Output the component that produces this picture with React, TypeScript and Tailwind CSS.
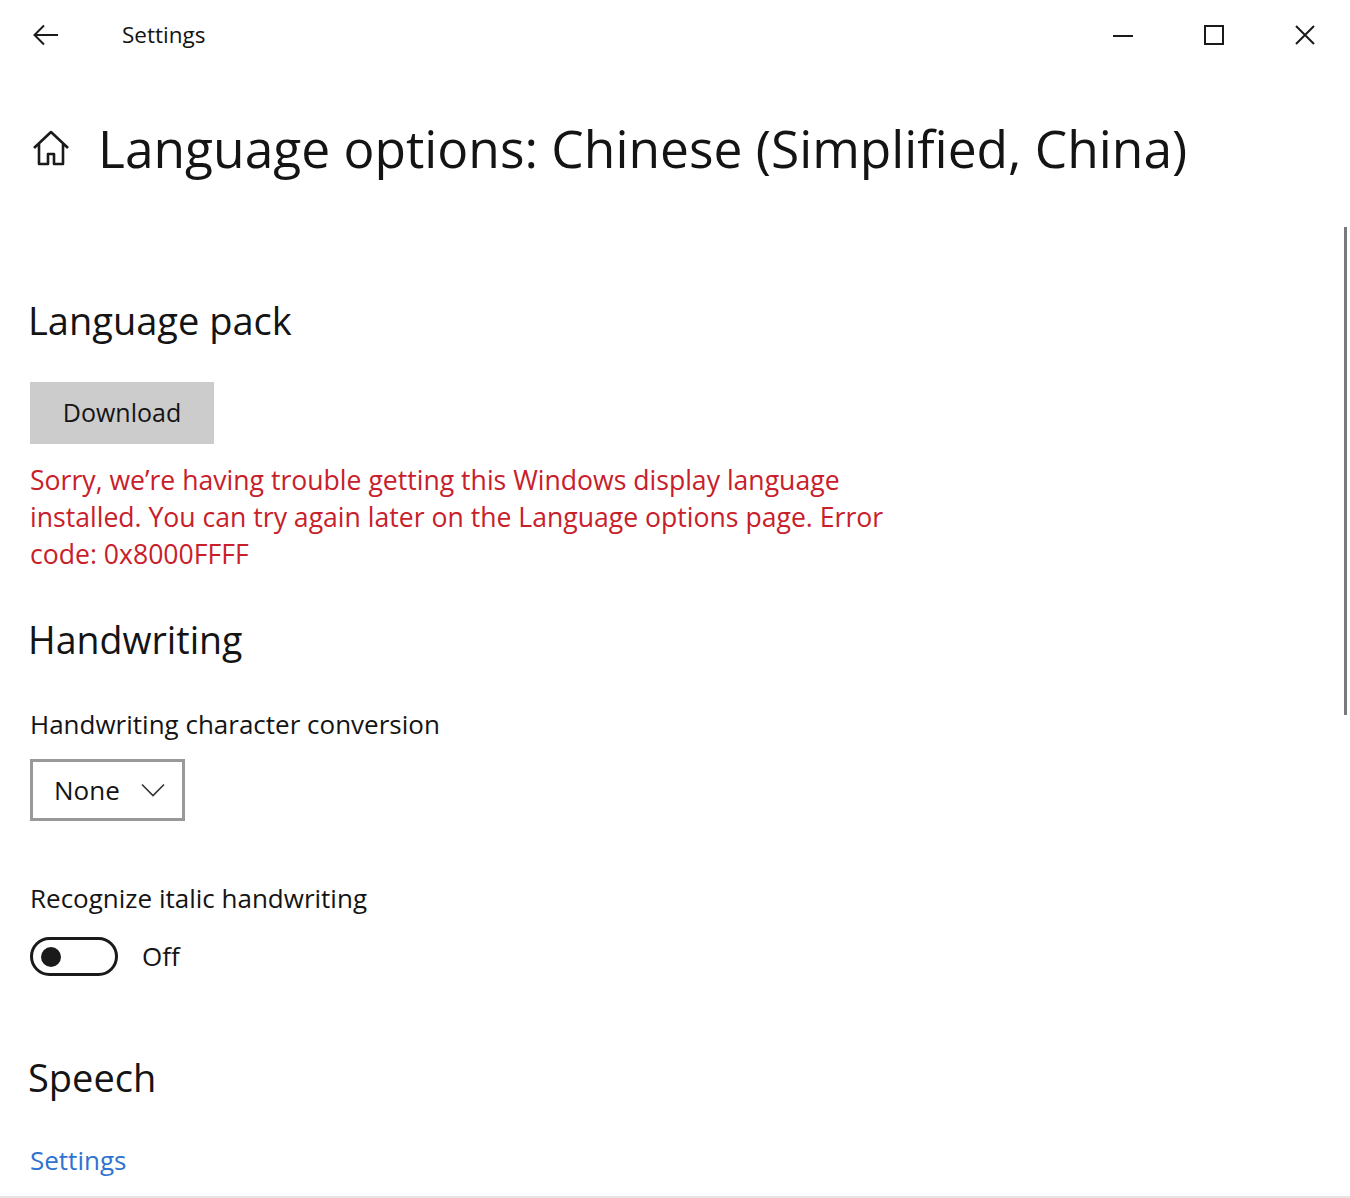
import React from 'react';

const font = { fontFamily: '"Open Sans", "Noto Sans", sans-serif' };

function BackArrow() {
  return (
    <svg width="26" height="22" viewBox="0 0 26 22" fill="none" stroke="#1a1a1a" strokeWidth="2">
      <path d="M25 11H2M11 1.5L1.5 11l9.5 9.5" />
    </svg>
  );
}

function HomeIcon() {
  return (
    <svg width="38" height="36" viewBox="0 0 38 36" fill="none" stroke="#1a1a1a" strokeWidth="2.6" strokeLinejoin="round">
      <path d="M2 18L19 2l17 16M7 13.5V34h9V24h6v10h9V13.5" />
    </svg>
  );
}

function WindowControls() {
  return (
    <div className="flex items-center h-full">
      <div className="w-[91px] flex justify-center">
        <svg width="20" height="20" viewBox="0 0 20 20" stroke="#1a1a1a" strokeWidth="2">
          <path d="M0 11h20" />
        </svg>
      </div>
      <div className="w-[91px] flex justify-center">
        <svg width="20" height="20" viewBox="0 0 20 20" fill="none" stroke="#1a1a1a" strokeWidth="2">
          <rect x="1" y="1" width="18" height="18" />
        </svg>
      </div>
      <div className="w-[91px] flex justify-center">
        <svg width="20" height="20" viewBox="0 0 20 20" stroke="#1a1a1a" strokeWidth="2">
          <path d="M1 1l18 18M19 1L1 19" />
        </svg>
      </div>
    </div>
  );
}

export default function App() {
  return (
    <div className="w-[1350px] h-[1198px] bg-white relative overflow-hidden text-[#141414]" style={font}>
      {/* title bar */}
      <header className="flex items-center justify-between h-[70px]">
        <div className="flex items-center">
          <div className="w-[60px] pl-[33px] flex items-center">
            <BackArrow />
          </div>
          <span className="ml-[62px] text-[22.5px] leading-none">Settings</span>
        </div>
        <div className="h-full">
          <WindowControls />
        </div>
      </header>

      <main className="pl-[28px]">
        <div className="mt-[43px] flex items-center h-[70px]">
          <div className="ml-[4px] w-[66px]">
            <HomeIcon />
          </div>
          <h1 className="text-[51.5px] leading-[70px]">Language options: Chinese (Simplified, China)</h1>
        </div>

        <h2 className="mt-[113px] text-[38px] leading-[48px]">Language pack</h2>

        <button className="mt-[38px] ml-[2px] w-[184px] h-[62px] bg-[#cccccc] text-[25px] block">Download</button>

        <p className="mt-[18px] ml-[2px] w-[880px] text-[26.6px] leading-[37px] text-[#c8202a]">
          Sorry, we’re having trouble getting this Windows display language installed. You can try again later on the Language options page. Error code: 0x8000FFFF
        </p>

        <h2 className="mt-[43px] text-[37.5px] leading-[48px]">Handwriting</h2>

        <div className="mt-[42px] ml-[2px] text-[26px] leading-[36px]">Handwriting character conversion</div>

        <div className="mt-[17px] ml-[2px] w-[155px] h-[62px] border-[3px] border-[#999999] flex items-center pl-[21px] pr-[17px] justify-between">
          <span className="text-[26px]">None</span>
          <svg width="24" height="14" viewBox="0 0 24 14" fill="none" stroke="#333" strokeWidth="1.6">
            <path d="M1 1.5l11 11 11-11" />
          </svg>
        </div>

        <div className="mt-[59px] ml-[2px] text-[26px] leading-[36px]">Recognize italic handwriting</div>

        <div className="mt-[21px] ml-[2px] flex items-center">
          <div className="w-[88px] h-[39px] rounded-full border-[3px] border-[#1a1a1a] flex items-center pl-[8px]">
            <div className="w-[20px] h-[20px] rounded-full bg-[#1a1a1a]" />
          </div>
          <span className="ml-[24px] text-[26px]">Off</span>
        </div>

        <h2 className="mt-[77px] text-[38px] leading-[48px]">Speech</h2>

        <a className="mt-[41px] ml-[2px] block text-[26px] leading-[36px] text-[#2f72d0]">Settings</a>
      </main>

      {/* scrollbar thumb */}
      <div className="absolute left-[1344px] top-[227px] w-[3px] h-[488px] bg-[#7a7a7a]" />
      {/* bottom edge */}
      <div className="absolute left-0 right-0 bottom-0 h-[2px] bg-[#e5e5e5]" />
    </div>
  );
}
